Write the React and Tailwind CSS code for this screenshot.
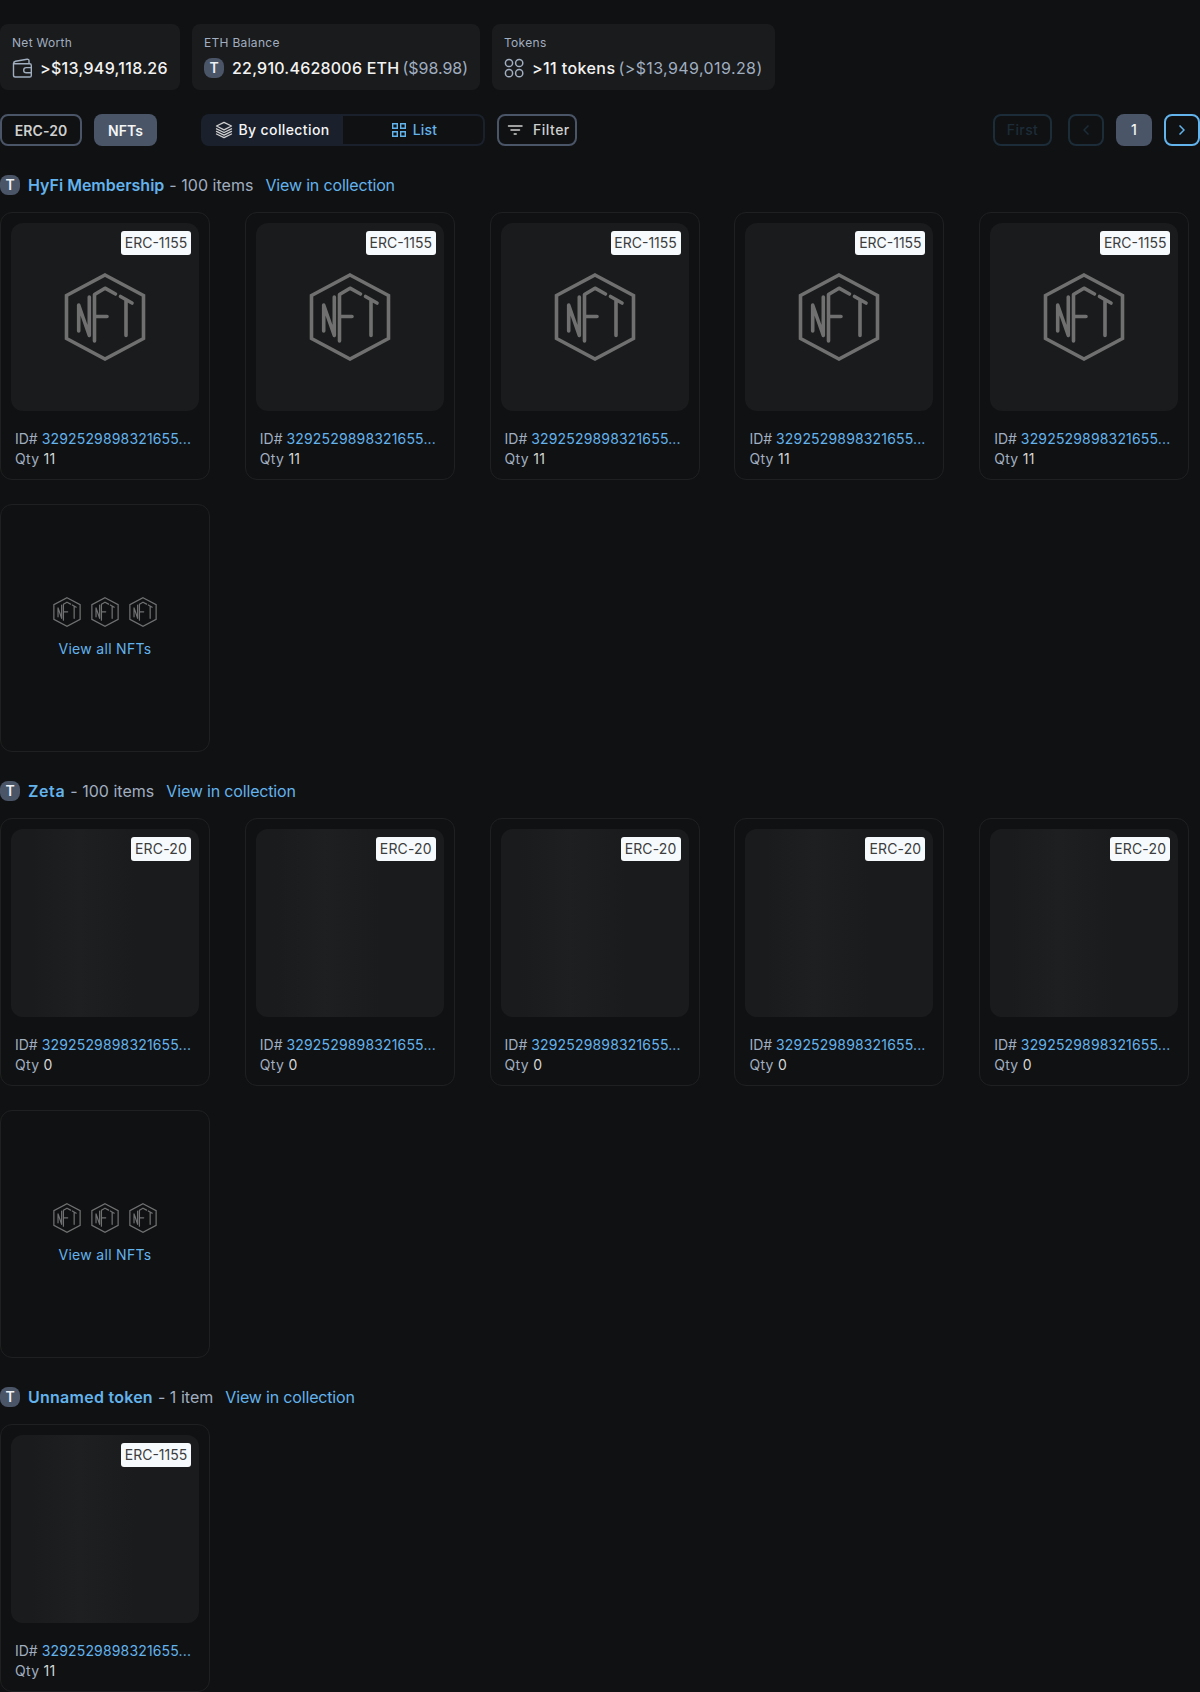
const SHIMMER = "bg-[linear-gradient(90deg,#1a1b1c_0%,#1a1b1c_11%,#1e1f20_37%,#1a1b1c_66%)]";

function NftIcon({ className }) {
  return (
    <svg viewBox="0 0 82 88" fill="none" stroke="currentColor" strokeWidth="3.6" strokeLinecap="round" strokeLinejoin="round" className={className}>
      <path d="M41 2 79.500 22.500V65.500L41 86 2.500 65.500V22.500Z" strokeLinejoin="miter" />
      <path d="M14.700 58V32L25.300 62.500V24" />
      <path d="M30.500 68V21.500L41 15.200 51.500 21M30.500 43.500H43" />
      <path d="M56.500 23.500 68 30M62 27.500V62.500" />
    </svg>
  );
}

function TokenBadge() {
  return (
    <span className="flex h-5 w-5 shrink-0 items-center justify-center rounded-lg bg-[#4A5568] text-sm leading-5 font-semibold text-[#edf0f4]">T</span>
  );
}

function WalletIcon() {
  return (
    <svg viewBox="0 0 20 20" fill="none" stroke="#A0AEC0" strokeWidth="1.4" strokeLinejoin="round" className="h-5 w-5">
      <path d="M1.500 5.800V17.200Q1.500 19 3.300 19H17.700Q19.300 19 19.300 17.400V7.400Q19.300 5.800 17.700 5.800Z" />
      <path d="M1.500 5.800Q1.500 3.800 3.500 3.300L15 1.300Q17 1 17 2.700V5.800" />
      <path d="M19.300 9.600H14.300A2.600 2.600 0 0 0 14.300 14.800H19.300" />
    </svg>
  );
}

function TokensIcon() {
  return (
    <svg viewBox="0 0 20 20" fill="none" stroke="#A0AEC0" strokeWidth="1.500" className="h-5 w-5">
      <circle cx="5" cy="5" r="3.600" />
      <circle cx="15.200" cy="5" r="3.600" />
      <circle cx="5" cy="15.200" r="3.600" />
      <circle cx="15.200" cy="15.200" r="3.600" />
    </svg>
  );
}

function Stat({ label, icon, value, note, width, valueClass, noteClass = "" }) {
  return (
    <div className={`flex h-[66px] flex-col rounded-lg bg-[#1a1b1c] px-3 pt-[11px] ${width}`}>
      <div className="text-xs leading-4 tracking-[0.3px] text-[#A0AEC0]">{label}</div>
      <div className="mt-[5px] flex items-center whitespace-nowrap text-base leading-6 font-medium text-[#f3f3f3]">
        {icon}
        <span className={`ml-2 ${valueClass}`}>{value}</span>
        {note && <span className={`ml-[3px] font-normal text-[#A0AEC0] ${noteClass}`}>{note}</span>}
      </div>
    </div>
  );
}

function Card({ type, qty, loaded }) {
  return (
    <div className="h-[268px] w-[210px] rounded-xl border border-[#1f2021] p-[10px]">
      <div className={`relative flex h-[188px] items-center justify-center rounded-xl ${loaded ? "bg-[#1a1b1c]" : SHIMMER}`}>
        {loaded && <NftIcon className="h-[88px] w-[82px] text-[#6f706f]" />}
        <span className={`absolute top-2 right-2 h-6 rounded-[3px] bg-[#F7FAFC] text-center text-sm leading-6 text-[#3c3d3e] ${type === "ERC-20" ? "w-[60px] tracking-[0.15px]" : "w-[70px]"}`}>{type}</span>
      </div>
      <div className="mt-[18px] ml-1 text-sm leading-5 whitespace-nowrap text-[#A0AEC0]">
        <div>ID# <span className="tracking-[0.16px] text-[#63B3ED]">3292529898321655...</span></div>
        <div className="tracking-[0.3px]">Qty <span className="text-[#d6d6d6]">{qty}</span></div>
      </div>
    </div>
  );
}

function Collection({ name, nameClass = "", items, type, qty, count, loaded, all }) {
  return (
    <section className="mb-[27px]">
      <div className="mb-[15px] flex h-6 items-center text-base leading-6">
        <TokenBadge />
        <span className={`ml-2 font-semibold text-[#63B3ED] ${nameClass}`}>{name}</span>
        <span className="ml-[5px] tracking-[0.03px] text-[#A0AEC0]">- {items}</span>
        <span className="ml-3 tracking-[-0.17px] text-[#63B3ED]">View in collection</span>
      </div>
      <div className="grid grid-cols-5 gap-6">
        {Array.from({ length: count }, (_, i) => (
          <Card key={i} type={type} qty={qty} loaded={loaded} />
        ))}
        {all && (
          <div className="flex h-[248px] w-[210px] flex-col items-center justify-center rounded-xl border border-[#1f2021]">
            <div className="flex gap-2">
              {[0, 1, 2].map((i) => (
                <span key={i} className="flex h-[30px] w-[30px] items-center justify-center">
                  <NftIcon className="h-[30px] w-7 text-[#707172]" />
                </span>
              ))}
            </div>
            <span className="mt-3 text-sm leading-5 tracking-[0.3px] text-[#63B3ED]">View all NFTs</span>
          </div>
        )}
      </div>
    </section>
  );
}

export default function App() {
  return (
    <main className="h-[1692px] w-[1200px] overflow-hidden bg-[#101112] pt-6 font-['Inter',sans-serif]">
      <div className="flex gap-3">
        <Stat label="Net Worth" icon={<WalletIcon />} value=">$13,949,118.26" width="w-[180px]" valueClass="tracking-[0.29px]" />
        <Stat label="ETH Balance" icon={<TokenBadge />} value="22,910.4628006 ETH" note="($98.98)" width="w-[288px]" valueClass="tracking-[0.22px]" />
        <Stat label="Tokens" icon={<TokensIcon />} value=">11 tokens" note="(>$13,949,019.28)" width="w-[283px]" valueClass="tracking-[0.4px]" noteClass="tracking-[0.4px]" />
      </div>

      <div className="mt-6 mb-[27px] flex h-8 items-stretch text-sm font-medium">
        <button className="w-[82px] rounded-lg border-2 border-[#4A5568] pt-px font-semibold tracking-[0.1px] text-[#cfcfcf]">ERC-20</button>
        <button className="ml-3 w-[63px] rounded-lg bg-[#4A5568] pt-px font-semibold text-[#f5f5f5]">NFTs</button>
        <div className="ml-11 flex w-[284px]">
          <button className="flex w-[142px] items-center justify-center gap-1 rounded-l-lg bg-[#1A202C] tracking-[0.4px] text-[#f5f5f5]">
            <svg viewBox="0 0 20 20" fill="none" stroke="#cfcfcf" strokeWidth="1.300" strokeLinejoin="round" strokeLinecap="round" className="h-5 w-5">
              <path d="M10 2.300 17.500 6 10 9.800 2.500 6ZM2.500 8.800 10 12.500 17.500 8.800M2.500 11.400 10 15.100 17.500 11.400M2.500 14 10 17.700 17.500 14" />
            </svg>
            By collection
          </button>
          <button className="flex w-[142px] items-center justify-center gap-1 rounded-r-lg border-2 border-l-0 border-[#1A202C] tracking-[0.2px] text-[#63B3ED]">
            <svg viewBox="0 0 20 20" fill="none" stroke="currentColor" strokeWidth="1.400" className="h-5 w-5">
              <path d="M3.700 3.700H8.300V8.300H3.700ZM11.700 3.700H16.300V8.300H11.700ZM3.700 11.700H8.300V16.300H3.700ZM11.700 11.700H16.300V16.300H11.700Z" />
            </svg>
            List
          </button>
        </div>
        <button className="ml-3 flex w-20 items-center gap-2 rounded-lg border-2 border-[#4A5568] pl-[6px] tracking-[0.5px] text-[#cfcfcf]">
          <svg viewBox="0 0 20 20" fill="none" stroke="currentColor" strokeWidth="1.500" strokeLinecap="round" className="h-5 w-5 shrink-0">
            <path d="M3.500 6H17M6 10H14.500M9.200 14H11.200" />
          </svg>
          Filter
        </button>
        <button className="ml-auto w-[59px] rounded-lg border-2 border-[#1c2c39] tracking-[0.4px] text-[#1c2c39]">First</button>
        <button className="ml-4 flex w-9 items-center justify-center rounded-lg border-2 border-[#1c2c39] text-[#1c2c39]">
          <svg viewBox="0 0 6 10" fill="none" stroke="currentColor" strokeWidth="1.500" className="h-[10px] w-[6px]"><path d="M5.500.5 1 5 5.500 9.500" /></svg>
        </button>
        <button className="ml-3 w-9 rounded-lg bg-[#4A5568] text-[#f5f5f5]">1</button>
        <button className="ml-3 flex w-9 items-center justify-center rounded-lg border-2 border-[#63B3ED] text-[#63B3ED]">
          <svg viewBox="0 0 6 10" fill="none" stroke="currentColor" strokeWidth="1.500" className="h-[10px] w-[6px]"><path d="M.5.5 5 5 .5 9.500" /></svg>
        </button>
      </div>

      <Collection name="HyFi Membership" items="100 items" type="ERC-1155" qty="11" count={5} loaded all />
      <Collection name="Zeta" nameClass="tracking-[0.6px]" items="100 items" type="ERC-20" qty="0" count={5} all />
      <Collection name="Unnamed token" nameClass="tracking-[0.25px]" items="1 item" type="ERC-1155" qty="11" count={1} />
    </main>
  );
}
